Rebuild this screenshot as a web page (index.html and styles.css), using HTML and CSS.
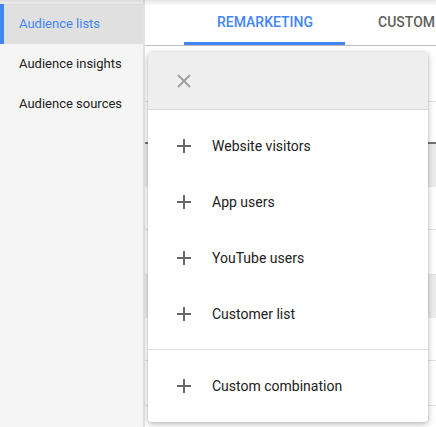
FILE: index.html
```html
<!DOCTYPE html>
<html>
<head>
<meta charset="UTF-8">
<title>Audience manager</title>
<link rel="stylesheet" href="styles.css">
</head>
<body>
	<div class="page">
		<div class="top-shade"></div>
		<!-- 왼쪽 메뉴 -->
		<div class="sidebar">
			<div class="nav-item selected">Audience lists</div>
			<div class="nav-item">Audience insights</div>
			<div class="nav-item">Audience sources</div>
		</div>

		<div class="main">
			<div class="tabs">
				<div class="tab active">REMARKETING</div>
				<div class="tab">CUSTOM</div>
			</div>

			<!-- 다이얼로그 뒤에 깔린 표 -->
			<div class="table">
				<div class="row row-toolbar"></div>
				<div class="row row-head"></div>
				<div class="row shaded"></div>
				<div class="row"></div>
				<div class="row tall"></div>
				<div class="row shaded"></div>
				<div class="row"><span class="cell-end">a</span></div>
				<div class="row tall"></div>
				<div class="row last">
					<span class="checkbox"></span>
					<span class="link">All converters</span>
				</div>
			</div>

			<div class="dialog">
				<div class="dialog-head">
					<svg class="icon close" viewBox="0 0 14 14" width="14" height="14">
						<path d="M1 1 L13 13 M13 1 L1 13" stroke="#9e9e9e" stroke-width="1.8" fill="none"/>
					</svg>
				</div>
				<div class="group">
					<div class="option">
						<svg class="icon" viewBox="0 0 14 14" width="14" height="14"><path d="M7 0 V14 M0 7 H14" stroke="#666" stroke-width="2" fill="none"/></svg>
						<span>Website visitors</span>
					</div>
					<div class="option">
						<svg class="icon" viewBox="0 0 14 14" width="14" height="14"><path d="M7 0 V14 M0 7 H14" stroke="#666" stroke-width="2" fill="none"/></svg>
						<span>App users</span>
					</div>
					<div class="option">
						<svg class="icon" viewBox="0 0 14 14" width="14" height="14"><path d="M7 0 V14 M0 7 H14" stroke="#666" stroke-width="2" fill="none"/></svg>
						<span>YouTube users</span>
					</div>
					<div class="option">
						<svg class="icon" viewBox="0 0 14 14" width="14" height="14"><path d="M7 0 V14 M0 7 H14" stroke="#666" stroke-width="2" fill="none"/></svg>
						<span>Customer list</span>
					</div>
				</div>
				<div class="group">
					<div class="option">
						<svg class="icon" viewBox="0 0 14 14" width="14" height="14"><path d="M7 0 V14 M0 7 H14" stroke="#666" stroke-width="2" fill="none"/></svg>
						<span>Custom combination</span>
					</div>
				</div>
			</div>
		</div>
	</div>
</body>
</html>
```

FILE: styles.css
```css
/* 전체 문서 */
* {
	box-sizing: border-box;
}

body {
	margin: 0;
	font-family: Roboto, "Liberation Sans", sans-serif;
	color: #212121;
	background-color: #ffffff;
}

.page {
	position: relative;
	display: flex;
	width: 436px;
	height: 427px;
	overflow: hidden;
}

.top-shade {
	position: absolute;
	left: 0;
	top: 0;
	width: 100%;
	height: 5px;
	background: linear-gradient(rgba(0, 0, 0, 0.1), rgba(0, 0, 0, 0.02));
	z-index: 3;
}

/* 왼쪽 메뉴 */
.sidebar {
	width: 145px;
	flex: none;
	padding-top: 4px;
	background-color: #f5f5f5;
	border-right: 2px solid #e2e2e2;
}

.nav-item {
	height: 40px;
	line-height: 40px;
	padding-left: 19px;
	font-size: 13px;
	color: #212121;
}

.nav-item.selected {
	background-color: #e0e0e0;
	border-left: 4px solid #4285f4;
	padding-left: 15px;
	color: #4285f4;
}

/* 탭 */
.main {
	position: relative;
	flex: 1;
	background-color: #ffffff;
}

.tabs {
	display: flex;
	height: 46px;
	padding-left: 39px;
	border-bottom: 1px solid #bdbdbd;
}

.tab {
	padding: 0 32px 0 33px;
	line-height: 44px;
	font-size: 14px;
	font-weight: 500;
	color: #616161;
	white-space: nowrap;
}

.tab.active {
	color: #4285f4;
	border-bottom: 3px solid #4285f4;
}

/* 뒤에 깔린 표 */
.row {
	position: relative;
	height: 43px;
	border-bottom: 1px solid #e0e0e0;
}

.row-toolbar {
	height: 56px;
}

.row-head {
	height: 42px;
	border-bottom: 2px solid #757575;
}

.row.shaded {
	background-color: #ececec;
	border-bottom-color: #ececec;
}

.row.tall {
	height: 45px;
}

.cell-end {
	position: absolute;
	right: 2px;
	top: 18px;
	font-size: 13px;
	color: #9e9e9e;
}

.row.last {
	display: flex;
	align-items: center;
	padding-top: 30px;
	padding-left: 19px;
	border-bottom: none;
}

.checkbox {
	width: 14px;
	height: 14px;
	border: 2px solid #616161;
	border-radius: 2px;
}

.link {
	margin-left: 22px;
	font-size: 13px;
	color: #3b78e7;
}

/* 다이얼로그 */
.dialog {
	position: absolute;
	left: 3px;
	top: 52px;
	width: 280px;
	height: 370px;
	background-color: #ffffff;
	border-radius: 3px;
	box-shadow: 0 2px 6px rgba(0, 0, 0, 0.28), 0 0 2px rgba(0, 0, 0, 0.12);
	overflow: hidden;
	z-index: 2;
}

.dialog-head {
	display: flex;
	align-items: center;
	height: 58px;
	padding-left: 29px;
	background-color: #eeeeee;
	border-bottom: 1px solid #dddddd;
}

.group {
	padding: 8px 0 7px;
}

.group + .group {
	border-top: 1px solid #e0e0e0;
	padding-bottom: 8px;
}

.option {
	display: flex;
	align-items: center;
	height: 56px;
	padding-left: 29px;
	font-size: 14px;
	color: #212121;
}

.icon {
	flex: none;
	margin-right: 21px;
}
```
